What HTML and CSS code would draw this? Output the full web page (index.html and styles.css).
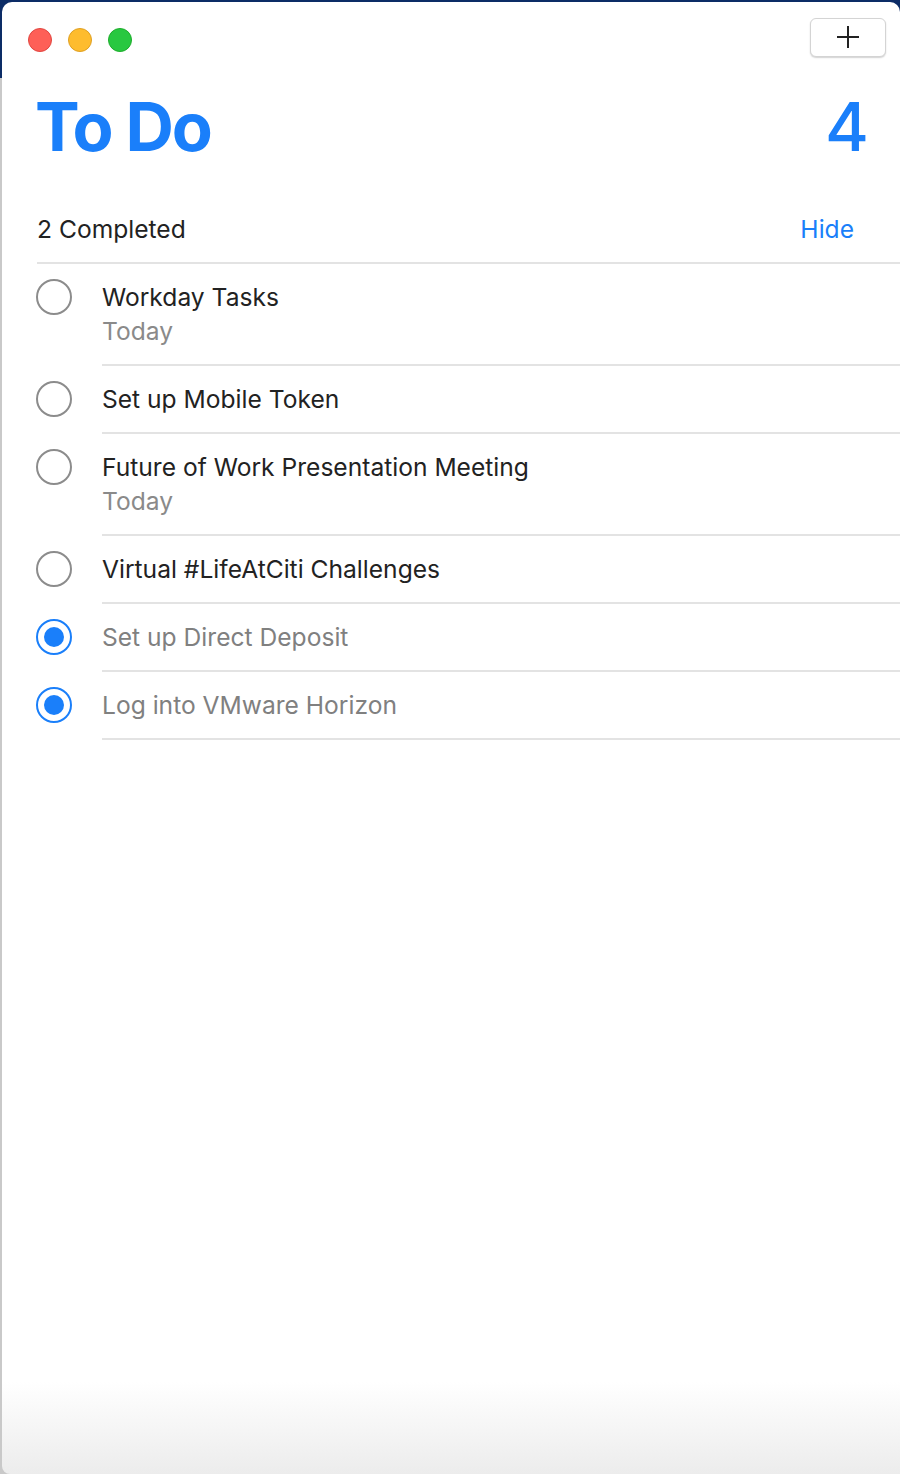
FILE: index.html
```html
<!DOCTYPE html>
<html>
<head>
<meta charset="utf-8">
<link rel="stylesheet" href="styles.css">
</head>
<body>
<div class="window">
  <div class="titlebar">
    <div class="lights">
      <span class="light red"></span>
      <span class="light yellow"></span>
      <span class="light green"></span>
    </div>
    <button class="add-btn" aria-label="Add">
      <svg width="24" height="24" viewBox="0 0 24 24"><path d="M12 1v22M1 12h22" stroke="#222" stroke-width="2" fill="none"/></svg>
    </button>
  </div>
  <div class="heading">
    <h1 class="title">To Do</h1>
    <div class="count">4</div>
  </div>
  <div class="completed-bar">
    <span class="completed-label">2 Completed</span>
    <span class="hide-link">Hide</span>
  </div>
  <ul class="tasks">
    <li class="task">
      <span class="check"></span>
      <div class="task-body">
        <div class="task-title">Workday Tasks</div>
        <div class="task-sub">Today</div>
      </div>
    </li>
    <li class="task">
      <span class="check"></span>
      <div class="task-body">
        <div class="task-title">Set up Mobile Token</div>
      </div>
    </li>
    <li class="task">
      <span class="check"></span>
      <div class="task-body">
        <div class="task-title">Future of Work Presentation Meeting</div>
        <div class="task-sub">Today</div>
      </div>
    </li>
    <li class="task">
      <span class="check"></span>
      <div class="task-body">
        <div class="task-title">Virtual #LifeAtCiti Challenges</div>
      </div>
    </li>
    <li class="task done">
      <span class="check"></span>
      <div class="task-body">
        <div class="task-title">Set up Direct Deposit</div>
      </div>
    </li>
    <li class="task done">
      <span class="check"></span>
      <div class="task-body">
        <div class="task-title">Log into VMware Horizon</div>
      </div>
    </li>
  </ul>
</div>
</body>
</html>
```
FILE: styles.css
```css
html, body {
  margin: 0;
  padding: 0;
  height: 1474px;
  overflow: hidden;
}
body {
  background: linear-gradient(to bottom, #0c2c66 0, #0c2c66 78px, #c9c9c9 78px, #c9c9c9 100%);
  font-family: Inter, "Noto Sans", "Liberation Sans", sans-serif;
  color: #222;
}
.window {
  margin: 2px 0 0 2px;
  height: 1472px;
  background: linear-gradient(to bottom, #fff 0, #fff 1380px, #ececec 1472px);
  border-radius: 10px 10px 0 8px;
  box-sizing: border-box;
  display: flex;
  flex-direction: column;
}
.titlebar {
  display: flex;
  align-items: center;
  justify-content: space-between;
  height: 76px;
  padding: 0 14px 0 26px;
}
.lights {
  display: flex;
  gap: 16px;
}
.light {
  width: 24px;
  height: 24px;
  border-radius: 50%;
  box-sizing: border-box;
}
.red { background: #fe5f57; border: 1px solid #e14640; }
.yellow { background: #febc2e; border: 1px solid #dfa023; }
.green { background: #28c840; border: 1px solid #1dad2b; }
.add-btn {
  width: 76px;
  height: 39px;
  margin-top: -6px;
  background: #fff;
  border: 1px solid #d4d4d4;
  border-radius: 6px;
  box-shadow: 0 1px 1.5px rgba(0,0,0,0.18);
  display: flex;
  align-items: center;
  justify-content: center;
  padding: 0;
}
.heading {
  display: flex;
  justify-content: space-between;
  align-items: baseline;
  padding: 5px 31px 0 33px;
  height: 88px;
}
.title {
  margin: 0;
  font-size: 67px;
  font-weight: 700;
  letter-spacing: -2px;
  color: #1a7ffa;
  line-height: 88px;
}
.count {
  font-size: 67px;
  font-weight: 500;
  color: #1a7ffa;
  line-height: 88px;
}
.completed-bar {
  display: flex;
  justify-content: space-between;
  align-items: center;
  margin-top: 25px;
  margin-left: 35px;
  padding: 16px 46px 16px 0;
  border-bottom: 2px solid #e3e3e3;
  font-size: 24.6px;
  line-height: 34px;
}
.completed-label { color: #222; }
.hide-link { color: #1a7ffa; }
.tasks {
  list-style: none;
  margin: 0;
  padding: 0;
}
.task {
  display: flex;
  align-items: flex-start;
}
.check {
  flex: none;
  width: 36px;
  height: 36px;
  box-sizing: border-box;
  border: 2px solid #8c8c8c;
  border-radius: 50%;
  margin: 15px 30px 0 34px;
  position: relative;
}
.done .check {
  border-color: #1a7ffa;
}
.done .check::after {
  content: "";
  position: absolute;
  left: 6px;
  top: 6px;
  width: 20px;
  height: 20px;
  border-radius: 50%;
  background: #1a7ffa;
}
.task-body {
  flex: 1;
  padding: 16px 0 16px;
  border-bottom: 2px solid #e3e3e3;
  font-size: 24.6px;
  line-height: 34px;
}
.task-title { color: #222; }
.task-sub { color: #8a8a8a; }
.done .task-title { color: #808080; }
```
